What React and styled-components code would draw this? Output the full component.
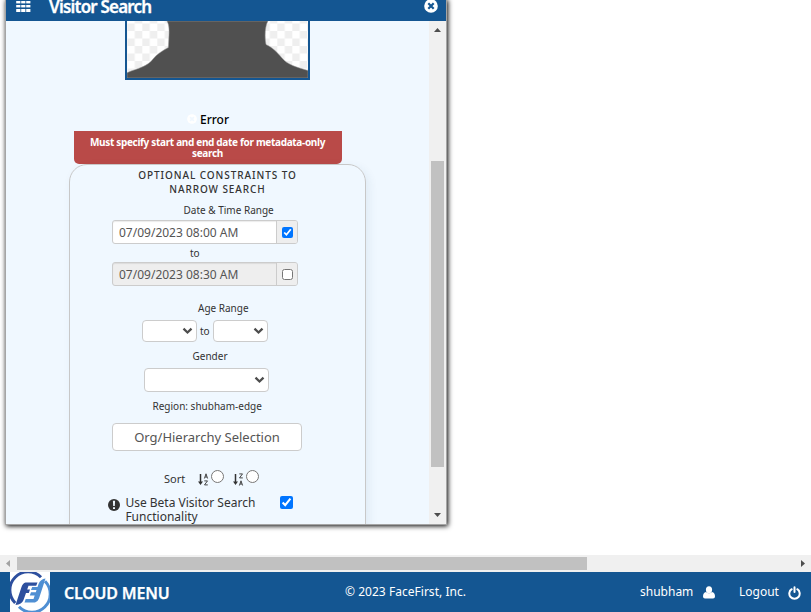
import React from 'react';
import styled, { createGlobalStyle } from 'styled-components';

const Global = createGlobalStyle`
  * { box-sizing: border-box; }
  body { margin: 0; background: #fff; font-family: "Noto Sans", "Open Sans", sans-serif; color: #333; overflow: hidden; }
  svg { display: block; flex: none; }
`;

const Page = styled.div`
  width: 811px; height: 612px; overflow: hidden;
  display: flex; flex-direction: column;
`;
const Workspace = styled.main`
  height: 555px; flex: none; padding-left: 6px; overflow: hidden;
`;
const Dialog = styled.section`
  width: 440px; height: 524px; background: #f0f8ff;
  display: flex; flex-direction: column;
  box-shadow: 0 0 0 1px #a5a5a5, 1px 1px 5px 1px #000;
`;
const TitleBar = styled.header`
  height: 21px; flex: none; background: #145692; color: #fff;
  display: flex; align-items: flex-start; padding: 0 8px 0 10px;
`;
const Title = styled.h1`
  margin: -5px auto 0 18px; font-size: 17px; line-height: 23px; font-weight: 600;
  letter-spacing: -0.8px; -webkit-text-stroke: .3px #fff; white-space: nowrap;
`;
const DialogBody = styled.div`
  flex: 1; min-height: 0; display: flex; justify-content: space-between;
`;
const Content = styled.div`
  width: 423px; overflow: hidden;
`;
const Avatar = styled.div`
  width: 185px; height: 59px; margin-left: 119px;
  border: 2px solid #145692; border-top: 0;
`;
const ErrorTitle = styled.div`
  display: flex; align-items: center; gap: 3px;
  margin: 29px 0 2px 181px; height: 20px;
  font-size: 12px; font-weight: 500; color: #000; white-space: nowrap;
`;
const ErrorBox = styled.div`
  width: 268px; height: 33px; margin-left: 68px; padding: 6px 1px 0 0;
  background: #b94a48; color: #fff; border-radius: 0 0 5px 5px;
  font-size: 10px; line-height: 11px; font-weight: 700; letter-spacing: -0.32px;
  text-align: center; white-space: nowrap;
`;
const Constraints = styled.div`
  width: 297px; height: 400px; margin-left: 63px; padding-top: 3px;
  border: 1px solid #c8c8c8; border-radius: 18px;
  box-shadow: 3px 3px 10px rgba(40, 80, 120, .08);
`;
const Legend = styled.div`
  text-align: center; font-size: 10px; line-height: 14px; font-weight: 500;
  letter-spacing: 0.93px; color: #333; white-space: nowrap;
`;
const Label = styled.div`
  height: ${p => p.$h}px; line-height: ${p => p.$h}px; margin-left: ${p => p.$left}px;
  padding-top: ${p => p.$drop || 0}px; font-size: 10px; white-space: nowrap;
`;
const DateField = styled.div`
  display: flex; width: 186px; height: 24px; margin-left: 42px;
  border: 1px solid #ccc; border-radius: 3px; overflow: hidden;
  background: ${p => (p.$disabled ? '#eee' : '#fff')};
  box-shadow: inset 0 1px 1px rgba(0, 0, 0, .08);
`;
const DateText = styled.div`
  flex: 1; padding-left: 6px; font-size: 12px; line-height: 23px; color: #555;
  white-space: nowrap;
`;
const AddOn = styled.div`
  width: 21px; display: flex; align-items: center; padding: 1px 0 0 4.5px;
  background: #eee; border-left: 1px solid #ccc;
`;
const Check = styled.input`
  width: ${p => p.$size || 13}px; height: ${p => p.$size || 13}px; margin: 0; flex: none;
`;
const AgeRow = styled.div`
  display: flex; align-items: center; gap: 4px; height: 22px; margin: 2px 0 0 72px;
`;
const AgeTo = styled.span`
  width: 8px; font-size: 10px; line-height: 20px; white-space: nowrap; margin-left: -1px; margin-right: 1px;
`;
const SelectBox = styled.div`
  width: ${p => p.$w}px; height: ${p => p.$h}px; margin-left: ${p => p.$left || 0}px;
  display: flex; align-items: center; justify-content: flex-end; padding-right: 3.5px;
  border: 1px solid #ccc; border-radius: 4px; background: #fff; flex: none;
`;
const HierarchyButton = styled.button`
  display: block; width: 190px; height: 28px; margin: 3px 0 0 42px; padding: 0;
  border: 1px solid #ccc; border-radius: 4px; background: #fff; color: #555;
  font: 13px/25px "Noto Sans", sans-serif; white-space: nowrap;
`;
const SortRow = styled.div`
  display: flex; align-items: flex-start; height: 20px; margin: 17px 0 0 94px;
`;
const SortText = styled.span`
  width: 34px; font-size: 11px; line-height: 22px;
`;
const SortOption = styled.label`
  width: 35px; display: flex; gap: 2px; padding-top: 2px;
  svg { margin-top: 3px; }
`;
const BetaRow = styled.div`
  display: flex; align-items: flex-start; margin: 8px 0 0 38px;
  svg { margin-top: 3px; }
`;
const BetaText = styled.div`
  width: 155px; margin-left: 5px; padding-left: .4px; font-size: 12px; line-height: 14px; white-space: nowrap;
`;
const VerticalBar = styled.div`
  width: 17px; background: #f0f0f0; display: flex; flex-direction: column; align-items: center;
  padding: 7px 0 7px; justify-content: space-between;
`;
const VerticalThumb = styled.div`
  width: 13px; height: 306px; background: #c1c1c1; margin-top: 83px;
`;
const HorizontalBar = styled.div`
  height: 17px; flex: none; background: #f0f0f0; display: flex; align-items: center; padding: 0 6px;
`;
const HorizontalThumb = styled.div`
  width: 570px; height: 13px; background: #c1c1c1; margin: 0 auto 0 7px;
`;
const Footer = styled.footer`
  height: 40px; flex: none; background: #145692; color: #fff; display: flex; align-items: center;
  padding: 0 9px 0 10px; font-size: 12px; white-space: nowrap;
`;
const MenuName = styled.strong`
  width: 281px; padding: 2px 0 0 14px; font-size: 16px; font-weight: 600; letter-spacing: -0.2px;
  -webkit-text-stroke: .25px #fff;
`;
const Copyright = styled.span`
  width: 309px; padding: 0 0 1px 14px; letter-spacing: .03px;
`;
const User = styled.span`
  display: flex; align-items: center; gap: 9.5px; width: 99px; padding-bottom: 1px;
  svg { margin-top: 2px; }
`;
const Logout = styled.span`
  display: flex; align-items: center; gap: 9.5px; padding-bottom: 1px;
  svg { margin-top: 2px; }
`;

const GridIcon = () => (
  <svg width="15" height="13" viewBox="0 0 15 13" fill="#fff">
    {[0, 5, 10].map(x => [[1, 2.4], [5, 2.4], [9, 3]].map(([y, h]) => (
      <rect key={`${x}-${y}`} x={x + 0.2} y={y} width="4.2" height={h} />
    )))}
  </svg>
);
const CloseIcon = ({ size, cross }) => (
  <svg width={size} height={size} viewBox="0 0 14 14">
    <circle cx="7" cy="7" r="6.8" fill="#fff" />
    <path d="M4.300 4.300 9.700 9.700M9.700 4.300 4.300 9.700" stroke={cross} strokeWidth="2.2" />
  </svg>
);
const TitleClose = styled.div`
  margin-top: -1px;
`;
const Silhouette = () => (
  <svg width="181" height="57" viewBox="127 21 181 57">
    <defs>
      <pattern id="checks" x="142.3" y="31" width="15" height="15" patternUnits="userSpaceOnUse">
        <rect width="15" height="15" fill="#fff" />
        <path d="M7.5 0H15V7.5H7.5ZM0 7.5H7.5V15H0Z" fill="#efefef" />
      </pattern>
    </defs>
    <rect x="127" y="21" width="181" height="57" fill="url(#checks)" />
    <path d="M167 21Q169.5 25 169 35L168.3 47.5C162 51 157 54 153 59C147 67 138 68 127 72.7V78H308V70.500C296 67 288 65 282 58C276 51 273 48 266 44.500C264.500 37 265 26 268 21Z" fill="#505050" stroke="#a0a0a0" strokeWidth=".5" />
  </svg>
);
const Chevron = () => (
  <svg width="11" height="8" viewBox="0 0 11 8">
    <path d="M1.500 1.700 5.500 5.500 9.500 1.700" fill="none" stroke="#4d4d4d" strokeWidth="2.3" />
  </svg>
);
const Arrow = ({ dir, color = '#4d4d4d' }) => {
  const d = { up: 'M0 4 3.500 0 7 4Z', down: 'M0 0H7L3.500 4Z', left: 'M4 0V7L0 3.500Z', right: 'M0 0V7L4 3.500Z' }[dir];
  const flat = dir === 'up' || dir === 'down';
  return <svg width={flat ? 7 : 4} height={flat ? 4 : 7} fill={color}><path d={d} /></svg>;
};
const SortIcon = ({ reverse }) => (
  <svg width="11" height="13" viewBox="0 0 11 13" fill="none" stroke="#333">
    <path d="M2.500 1V9" strokeWidth="1.5" />
    <path d="M0 8.500H5L2.500 12Z" fill="#333" stroke="none" />
    <g transform={reverse ? 'translate(0 7)' : undefined}>
      <path d="M6.400 5.500 8 .8 9.600 5.500M7 4H9" strokeWidth=".9" />
    </g>
    <g transform={reverse ? 'translate(0 -7)' : undefined}>
      <path d="M6.300 7.900H9.500L6.500 11.900H9.800" strokeWidth=".9" />
    </g>
  </svg>
);
const AlertIcon = () => (
  <svg width="12" height="12" viewBox="0 0 12 12">
    <circle cx="6" cy="6" r="6" fill="#333" />
    <path d="M4.900 1.800H7.100L6.800 7H5.200ZM5 8.200H7V10H5Z" fill="#f0f8ff" />
  </svg>
);
const Logo = () => (
  <svg width="40" height="40" viewBox="0 0 40 40">
    <rect width="40" height="40" fill="#fff" />
    <path d="M5.200 31A18.200 18.200 0 0 1 31 5.200" fill="none" stroke="#2d4f9e" strokeWidth="3" />
    <path d="M35 9.300A18.200 18.200 0 0 1 9 34.800" fill="none" stroke="#4f8fd3" strokeWidth="3" />
    <path d="M15.500 10.500H27.500L26.200 13.700H18.500L17.200 17.500H20L18.800 21H16L13.500 28Q11.800 32.500 5.500 33L11.500 15Q12.800 11 15.500 10.500Z" fill="#2d4f9e" />
    <path d="M35.500 6.500 29 26.500Q27.700 30 25 30.500H14.500L15.700 27H23.500L24.700 23.400H19.800L21 20.200H25.800L26.500 18H21L22.200 15H27.500L28.500 12Q30.500 7 35.500 6.500Z" fill="#4f8fd3" />
  </svg>
);
const UserIcon = () => (
  <svg width="12" height="13" viewBox="0 0 12 13" fill="#fff">
    <ellipse cx="6" cy="3.700" rx="3.100" ry="3.500" />
    <path d="M3 6Q0 6.500 0 10.500Q0 12.500 2 12.500H10Q12 12.500 12 10.500Q12 6.500 9 6Q6 8.500 3 6Z" />
  </svg>
);
const PowerIcon = () => (
  <svg width="13" height="14" viewBox="0 0 13 14" fill="none" stroke="#fff" strokeWidth="2" strokeLinecap="round">
    <path d="M3.700 3.200A5.200 5.200 0 1 0 9.300 3.200M6.500 1.300V6" />
  </svg>
);

const DateInput = ({ value, enabled }) => (
  <DateField $disabled={!enabled}>
    <DateText>{value}</DateText>
    <AddOn><Check type="checkbox" $size={11} defaultChecked={enabled} /></AddOn>
  </DateField>
);

export default function App() {
  return (
    <Page>
      <Global />
      <Workspace>
        <Dialog>
          <TitleBar>
            <GridIcon />
            <Title>Visitor Search</Title>
            <TitleClose><CloseIcon size={14} cross="#145692" /></TitleClose>
          </TitleBar>
          <DialogBody>
            <Content>
              <Avatar><Silhouette /></Avatar>
              <ErrorTitle><CloseIcon size={10} cross="#f0f8ff" />Error</ErrorTitle>
              <ErrorBox>Must specify start and end date for metadata-only<br />search</ErrorBox>
              <Constraints>
                <Legend>OPTIONAL CONSTRAINTS TO<br />NARROW SEARCH</Legend>
                <Label $h={24} $left={113.5} $drop={2}>Date &amp; Time Range</Label>
                <DateInput value="07/09/2023 08:00 AM" enabled />
                <Label $h={18} $left={120}>to</Label>
                <DateInput value="07/09/2023 08:30 AM" enabled={false} />
                <Label $h={32} $left={128} $drop={6}>Age Range</Label>
                <AgeRow>
                  <SelectBox $w={55} $h={22}><Chevron /></SelectBox>
                  <AgeTo>to</AgeTo>
                  <SelectBox $w={55} $h={22}><Chevron /></SelectBox>
                </AgeRow>
                <Label $h={26} $left={122.5} $drop={1}>Gender</Label>
                <SelectBox $w={125} $h={24} $left={74}><Chevron /></SelectBox>
                <Label $h={28} $left={82.5}>Region: shubham-edge</Label>
                <HierarchyButton>Org/Hierarchy Selection</HierarchyButton>
                <SortRow>
                  <SortText>Sort</SortText>
                  <SortOption><SortIcon /><Check type="radio" name="sort" /></SortOption>
                  <SortOption><SortIcon reverse /><Check type="radio" name="sort" /></SortOption>
                </SortRow>
                <BetaRow>
                  <AlertIcon />
                  <BetaText>Use Beta Visitor Search<br />Functionality</BetaText>
                  <Check type="checkbox" defaultChecked />
                </BetaRow>
              </Constraints>
            </Content>
            <VerticalBar>
              <Arrow dir="up" />
              <VerticalThumb />
              <Arrow dir="down" />
            </VerticalBar>
          </DialogBody>
        </Dialog>
      </Workspace>
      <HorizontalBar>
        <Arrow dir="left" color="#a3a3a3" />
        <HorizontalThumb />
        <Arrow dir="right" />
      </HorizontalBar>
      <Footer>
        <Logo />
        <MenuName>CLOUD MENU</MenuName>
        <Copyright>© 2023 FaceFirst, Inc.</Copyright>
        <User>shubham <UserIcon /></User>
        <Logout>Logout <PowerIcon /></Logout>
      </Footer>
    </Page>
  );
}
